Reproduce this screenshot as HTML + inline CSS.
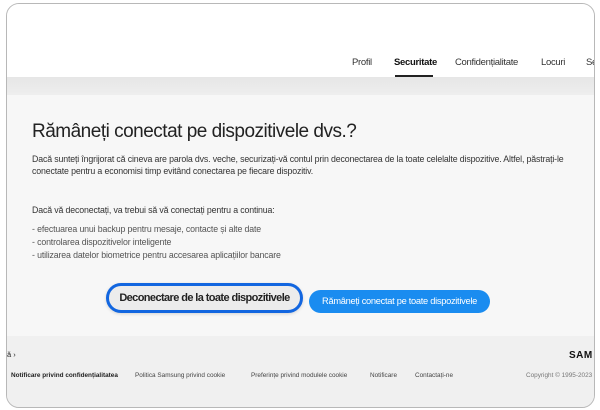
<!DOCTYPE html>
<html><head><meta charset="utf-8"><style>
*{margin:0;padding:0;box-sizing:border-box}
body{width:600px;height:410px;background:#fff;font-family:"Liberation Sans",sans-serif;overflow:hidden;position:relative}
.frame{position:absolute;left:6px;top:3px;width:589px;height:405px;border:1px solid #b8b8b8;border-radius:13px;overflow:hidden;background:#f7f7f7}
.hdr{position:absolute;left:0;top:0;width:100%;height:73px;background:#fff}
.band{position:absolute;left:0;top:73px;width:100%;height:18px;background:linear-gradient(#e6e6e6,#eeeeee)}
.nav{position:absolute;top:53px;font-size:9.5px;color:#333;white-space:nowrap;letter-spacing:-0.3px}
.ul{position:absolute;left:388px;top:71px;width:38px;height:2px;background:#222}
h1{position:absolute;left:25px;top:117px;font-size:19px;font-weight:normal;color:#222;letter-spacing:-0.5px;white-space:nowrap}
.t{position:absolute;left:25px;font-size:8.8px;color:#333;white-space:nowrap;letter-spacing:-0.15px}
.b1{position:absolute;left:99px;top:279px;width:197px;height:30px;border:3px solid #1266e0;border-radius:16px;background:#ececec;font-size:11px;font-weight:bold;color:#222;text-align:center;line-height:24px;letter-spacing:-0.6px;white-space:nowrap;box-shadow:0 1px 3px rgba(0,0,0,.15)}
.b2{position:absolute;left:302px;top:286px;width:181px;height:23px;border-radius:12px;background:#1a8cf0;color:#fff;font-size:9.3px;text-align:center;line-height:23px;white-space:nowrap;letter-spacing:-0.3px}
.ft{position:absolute;left:0;top:332px;width:100%;height:73px;background:#f0f0f0}
.f{position:absolute;font-size:6.4px;color:#444;white-space:nowrap}
</style></head><body>
<div class="frame">
<div class="hdr"></div>
<div class="nav" style="left:345px">Profil</div>
<div class="nav" style="left:387px;font-weight:bold;color:#111">Securitate</div>
<div class="nav" style="left:448px">Confidențialitate</div>
<div class="nav" style="left:534px">Locuri</div>
<div class="nav" style="left:579px">Se</div>
<div class="ul"></div>
<div class="band"></div>
<h1>Rămâneți conectat pe dispozitivele dvs.?</h1>
<div class="t" style="top:150px">Dacă sunteți îngrijorat că cineva are parola dvs. veche, securizați-vă contul prin deconectarea de la toate celelalte dispozitive. Altfel, păstrați-le</div>
<div class="t" style="top:162px">conectate pentru a economisi timp evitând conectarea pe fiecare dispozitiv.</div>
<div class="t" style="top:201px">Dacă vă deconectați, va trebui să vă conectați pentru a continua:</div>
<div class="t" style="top:220px;color:#555">- efectuarea unui backup pentru mesaje, contacte și alte date</div>
<div class="t" style="top:233px;color:#555">- controlarea dispozitivelor inteligente</div>
<div class="t" style="top:246px;color:#555">- utilizarea datelor biometrice pentru accesarea aplicațiilor bancare</div>
<div class="b1">Deconectare de la toate dispozitivele</div>
<div class="b2">Rămâneți conectat pe toate dispozitivele</div>
<div class="ft"></div>
<div class="f" style="left:0;top:346px;font-size:7.5px;color:#222">ă ›</div>
<div class="f" style="left:562px;top:346px;font-size:10px;font-weight:bold;color:#111;letter-spacing:0.5px">SAM</div>
<div class="f" style="left:4px;top:368px;font-weight:bold;color:#222">Notificare privind confidențialitatea</div>
<div class="f" style="left:128px;top:368px">Politica Samsung privind cookie</div>
<div class="f" style="left:244px;top:368px">Preferințe privind modulele cookie</div>
<div class="f" style="left:363px;top:368px">Notificare</div>
<div class="f" style="left:408px;top:368px">Contactați-ne</div>
<div class="f" style="left:519px;top:368px;color:#777">Copyright © 1995-2023 S</div>
</div>
</body></html>
